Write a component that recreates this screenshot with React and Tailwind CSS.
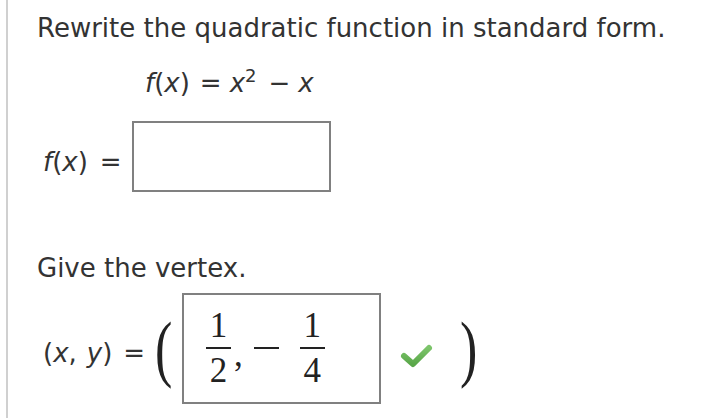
export default function App() {
  const sans = { fontFamily: '"DejaVu Sans", Verdana, sans-serif' };
  const serif = { fontFamily: '"Liberation Serif", "Times New Roman", serif' };
  return (
    <div className="w-[702px] h-[418px] bg-white overflow-hidden text-[#333]" style={sans}>
      <div className="ml-[6px] h-full border-l-2 border-[#d0d0d0] pl-[29px] pt-[12px] text-[26px] leading-[32px]">
        <div>Rewrite the quadratic function in standard form.</div>
        <div className="pl-[108px] mt-[23px] flex items-baseline whitespace-nowrap">
          <span className="italic">f</span>(<span className="italic">x</span>)
          <span className="ml-[10px]">=</span>
          <span className="italic ml-[8px]">x</span>
          <span className="text-[18px] relative -top-[10px]">2</span>
          <span className="ml-[12px]">−</span>
          <span className="italic ml-[8px]">x</span>
        </div>
        <div className="mt-[19px] flex items-start">
          <div className="w-[95px] pl-[6px] mt-[25px] whitespace-nowrap">
            <span className="italic">f</span>(<span className="italic">x</span>)<span className="ml-[12px]">=</span>
          </div>
          <div className="w-[199px] h-[71px] border-2 border-[#808080]"></div>
        </div>
        <div className="mt-[60px]">Give the vertex.</div>
        <div className="mt-[9px] flex items-start">
          <div className="w-[113px] pl-[6px] mt-[44px] whitespace-nowrap">
            (<span className="italic">x</span>,<span className="italic ml-[10px]">y</span>)<span className="ml-[11px]">=</span>
          </div>
          <div className="w-[32px] h-[111px] flex items-center pl-[5px]">
            <span className="text-[52px] leading-[52px] text-[#222] scale-y-[1.42] inline-block" style={serif}>(</span>
          </div>
          <div className="w-[199px] h-[111px] border-2 border-[#808080] flex items-center pl-[22px] text-[#222]" style={serif}>
            <div className="flex flex-col items-center text-[35px] leading-[28px] w-[25px]">
              <span>1</span>
              <span className="w-[25px] h-[2px] bg-[#222] mt-[7px] mb-[8px]"></span>
              <span>2</span>
            </div>
            <span className="text-[35px] leading-[28px] ml-[3px] mt-[12px]">,</span>
            <span className="w-[25px] h-[2px] bg-[#222] ml-[11px] -mt-[1px]"></span>
            <div className="flex flex-col items-center text-[35px] leading-[28px] w-[25px] ml-[21px]">
              <span>1</span>
              <span className="w-[25px] h-[2px] bg-[#222] mt-[7px] mb-[8px]"></span>
              <span>4</span>
            </div>
          </div>
          <div className="h-[111px] flex items-center ml-[17px]">
            <svg width="36" height="28" viewBox="0 0 36 28" className="mt-[14px]">
              <defs>
                <linearGradient id="g" x1="0" y1="0" x2="0" y2="1">
                  <stop offset="0" stopColor="#7cc46a" />
                  <stop offset="1" stopColor="#5aa74a" />
                </linearGradient>
              </defs>
              <path d="M6 14 L15 22 L31 6" fill="none" stroke="url(#g)" strokeWidth="6" strokeLinecap="round" strokeLinejoin="round" />
            </svg>
          </div>
          <div className="h-[111px] flex items-center ml-[26px]">
            <span className="text-[52px] leading-[52px] text-[#222] scale-y-[1.42] inline-block" style={serif}>)</span>
          </div>
        </div>
      </div>
    </div>
  );
}
